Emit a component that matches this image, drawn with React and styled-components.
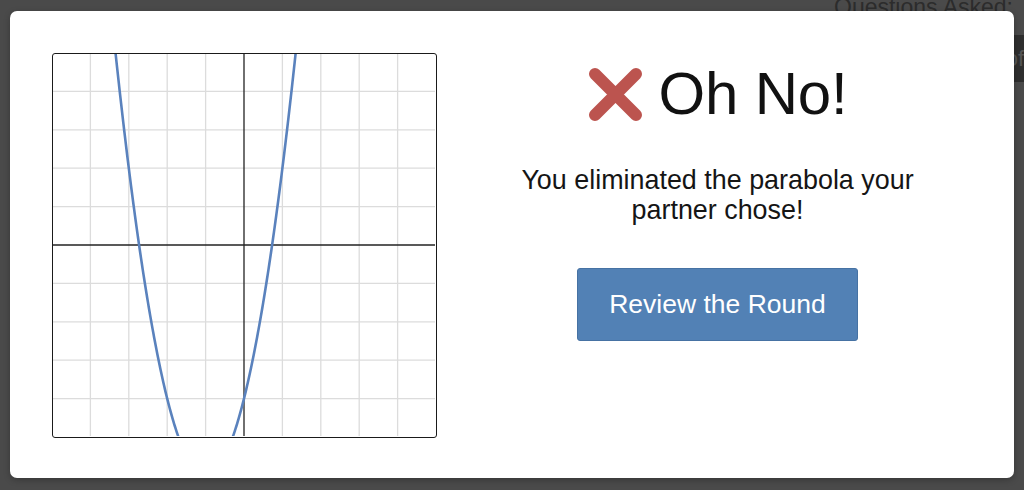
import React from "react";
import styled, { createGlobalStyle } from "styled-components";

const GlobalStyle = createGlobalStyle`
  html, body {
    margin: 0;
    padding: 0;
    width: 1024px;
    height: 490px;
    overflow: hidden;
    background: #474747;
    font-family: "Liberation Sans", Arial, sans-serif;
  }
  #root { height: 490px; }
`;

/* ---------- page behind the dialog ---------- */

const Page = styled.div`
  position: relative;
  height: 490px;
  display: flex;
  justify-content: flex-end;
  background: #4a4a4a;
  overflow: hidden;
`;

const Sidebar = styled.aside`
  width: 194px;
  display: flex;
  flex-direction: column;
`;

const SidebarTitle = styled.div`
  font-size: 23px;
  line-height: 20px;
  color: #2c2c2c;
  white-space: nowrap;
  padding-left: 4px;
  margin-top: -3px;
`;

const SidebarBar = styled.div`
  margin-top: 18px;
  height: 47px;
  background: #2e2e2e;
  color: #555;
  font-size: 22px;
  line-height: 47px;
  text-align: right;
`;

/* ---------- dialog ---------- */

const Overlay = styled.div`
  position: absolute;
  inset: 0;
  padding: 11px 10px 12px 10px;
  display: flex;
`;

const Dialog = styled.div`
  flex: 1;
  background: #fff;
  border-radius: 7px;
  padding: 42px;
  display: flex;
  gap: 26px;
  box-shadow: 0 2px 6px rgba(0, 0, 0, 0.25);
`;

const GraphFrame = styled.div`
  width: 385px;
  height: 385px;
  flex: none;
  border: 1.5px solid #1a1a1a;
  border-radius: 3px;
  box-sizing: border-box;
  overflow: hidden;
`;

const Content = styled.div`
  flex: 1;
  display: flex;
  flex-direction: column;
  align-items: center;
  text-align: center;
`;

const Heading = styled.h1`
  margin: 13px 0 0 0;
  display: flex;
  align-items: center;
  gap: 16px;
  font-weight: 400;
  font-size: 60px;
  line-height: 56px;
  color: #111;
  letter-spacing: -0.2px;
`;

const Message = styled.p`
  margin: 43px 0 0 0;
  font-size: 26.9px;
  line-height: 30px;
  color: #151515;
  width: 430px;
`;

const ActionButton = styled.button`
  margin-top: 43px;
  width: 281px;
  height: 73px;
  background: #5281b5;
  border: 1px solid #4672a3;
  border-radius: 3px;
  color: #fff;
  font-family: "Liberation Sans", Arial, sans-serif;
  font-size: 26.5px;
  cursor: pointer;
`;

function CrossMark() {
  return (
    <svg width="55" height="55" viewBox="0 0 55 55">
      <path
        d="M7 7 L48 48 M48 7 L7 48"
        stroke="#bc544f"
        strokeWidth="12"
        strokeLinecap="round"
      />
    </svg>
  );
}

function ParabolaGraph() {
  // coordinate range -5..5 on both axes, 10 grid cells
  const size = 384;
  const scale = size / 10;
  const toX = (x) => (x + 5) * scale;
  const toY = (y) => (5 - y) * scale;
  const f = (x) => 2 * (x + 1) * (x + 1) - 6;

  const lines = [];
  for (let i = 1; i < 10; i++) {
    if (i === 5) continue;
    const p = i * scale;
    lines.push(<line key={`v${i}`} x1={p} y1={0} x2={p} y2={size} />);
    lines.push(<line key={`h${i}`} x1={0} y1={p} x2={size} y2={p} />);
  }

  const pts = [];
  for (let x = -3.6; x <= 1.6; x += 0.02) {
    pts.push(`${toX(x).toFixed(2)},${toY(f(x)).toFixed(2)}`);
  }

  return (
    <svg width="382" height="382" viewBox={`1 1 ${size - 2} ${size - 2}`} preserveAspectRatio="none">
      <g stroke="#dcdcdc" strokeWidth="1.3">{lines}</g>
      <g stroke="#222" strokeWidth="1.3">
        <line x1={toX(0)} y1={0} x2={toX(0)} y2={size} />
        <line x1={0} y1={toY(0)} x2={size} y2={toY(0)} />
      </g>
      <polyline
        points={pts.join(" ")}
        fill="none"
        stroke="#5a82bd"
        strokeWidth="2.6"
        strokeLinejoin="round"
      />
    </svg>
  );
}

export default function App() {
  return (
    <>
      <GlobalStyle />
      <Page>
        <Sidebar>
          <SidebarTitle>Questions Asked:</SidebarTitle>
          <SidebarBar>of</SidebarBar>
        </Sidebar>
        <Overlay>
          <Dialog>
            <GraphFrame>
              <ParabolaGraph />
            </GraphFrame>
            <Content>
              <Heading>
                <CrossMark />
                <span>Oh No!</span>
              </Heading>
              <Message>You eliminated the parabola your partner chose!</Message>
              <ActionButton>Review the Round</ActionButton>
            </Content>
          </Dialog>
        </Overlay>
      </Page>
    </>
  );
}
